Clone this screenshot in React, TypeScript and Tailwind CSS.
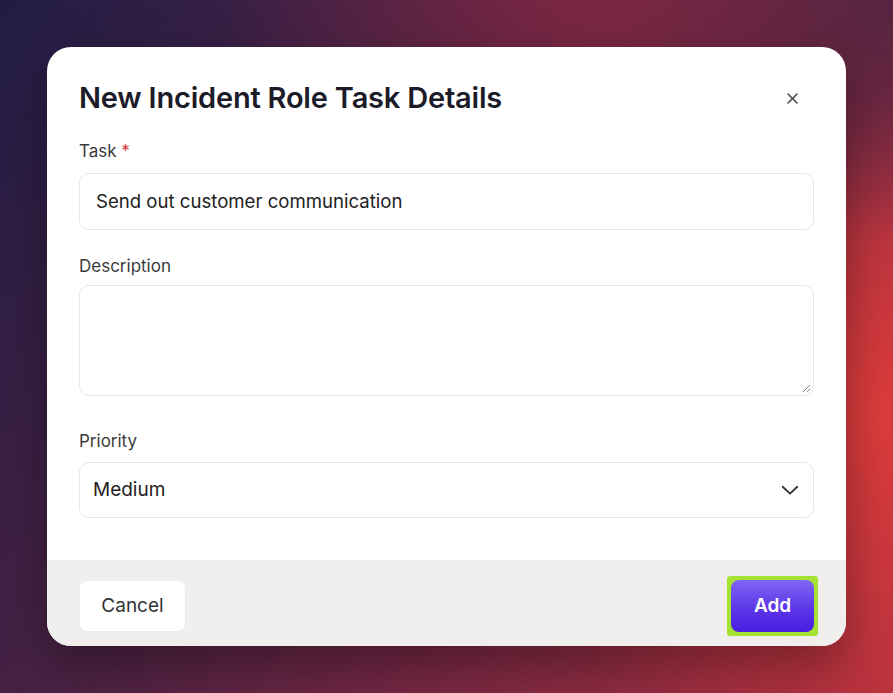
import React from "react";

export default function App() {
  return (
    <div
      className="relative w-[893px] h-[693px] overflow-hidden bg-[radial-gradient(ellipse_30%_35%_at_100%_0%,rgba(82,36,64,0.95)_0%,rgba(82,36,64,0)_100%),radial-gradient(ellipse_60%_55%_at_100%_60%,#de3c3c_0%,rgba(220,59,60,0.6)_45%,rgba(220,59,60,0)_85%),radial-gradient(ellipse_40%_30%_at_65%_0%,rgba(150,40,65,0.55)_0%,rgba(150,40,65,0)_100%),linear-gradient(120deg,#211c45_0%,#4a2244_35%,#722744_60%,#b5313f_100%)] flex items-start justify-start pt-[47px] pl-[47px]"
      style={{ fontFamily: "Inter, 'Noto Sans', sans-serif" }}
    >
      <div className="w-[799px] h-[599px] bg-white rounded-[24px] shadow-[0_20px_50px_rgba(0,0,0,0.35)] flex flex-col overflow-hidden">
        <div className="flex-1 px-[32px] pt-[33px]">
          <div className="flex items-center justify-between h-[36px]">
            <h1 className="text-[29px] font-semibold text-[#1c1b29] tracking-[-0.2px]">
              New Incident Role Task Details
            </h1>
            <button className="w-[30px] h-[30px] mr-[7px] flex items-center justify-center text-[#444]">
              <svg width="11" height="11" viewBox="0 0 11 11">
                <path d="M1 1L10 10M10 1L1 10" stroke="#4a4a4a" strokeWidth="1.6" strokeLinecap="round" />
              </svg>
            </button>
          </div>

          <div className="mt-[23px] text-[17px] leading-[24px] text-[#3b3b3b]">
            Task <span className="text-[#d13a3a]">*</span>
          </div>
          <div className="mt-[10px] h-[57px] rounded-[10px] border border-[#e6e6e6] flex items-center px-[16px] text-[18.6px] text-[#222]">
            Send out customer communication
          </div>

          <div className="mt-[24px] text-[17px] leading-[24px] text-[#3b3b3b]">Description</div>
          <div className="mt-[7px] h-[111px] rounded-[10px] border border-[#e6e6e6] relative">
            <svg className="absolute right-[2px] bottom-[2px]" width="9" height="9" viewBox="0 0 9 9">
              <path d="M8 1L1 8M8 5L5 8" stroke="#8a8a8a" strokeWidth="1" />
            </svg>
          </div>

          <div className="mt-[33px] text-[17px] leading-[24px] text-[#3b3b3b]">Priority</div>
          <div className="mt-[9px] h-[56px] rounded-[10px] border border-[#e6e6e6] flex items-center justify-between pl-[13px] pr-[12px] text-[19px] text-[#222]">
            <span>Medium</span>
            <svg width="22" height="22" viewBox="0 0 24 24" fill="none">
              <path d="M4 8.5L12 16L20 8.5" stroke="#333" strokeWidth="2" strokeLinecap="round" strokeLinejoin="round" />
            </svg>
          </div>
        </div>

        <div className="h-[86px] bg-[#f0efee] flex items-center justify-between pt-[6px] pl-[32px] pr-[28px]">
          <button className="w-[107px] h-[52px] bg-white rounded-[8px] border border-[#ebebeb] text-[19px] text-[#333]">
            Cancel
          </button>
          <span className="p-[4px] bg-[#a6e233] rounded-[3px] flex">
            <button className="w-[83px] h-[52px] rounded-[8px] bg-[linear-gradient(180deg,#7f66f2_0%,#5a33e8_60%,#4a1de2_100%)] text-white text-[19px] font-semibold">
              Add
            </button>
          </span>
        </div>
      </div>
    </div>
  );
}
